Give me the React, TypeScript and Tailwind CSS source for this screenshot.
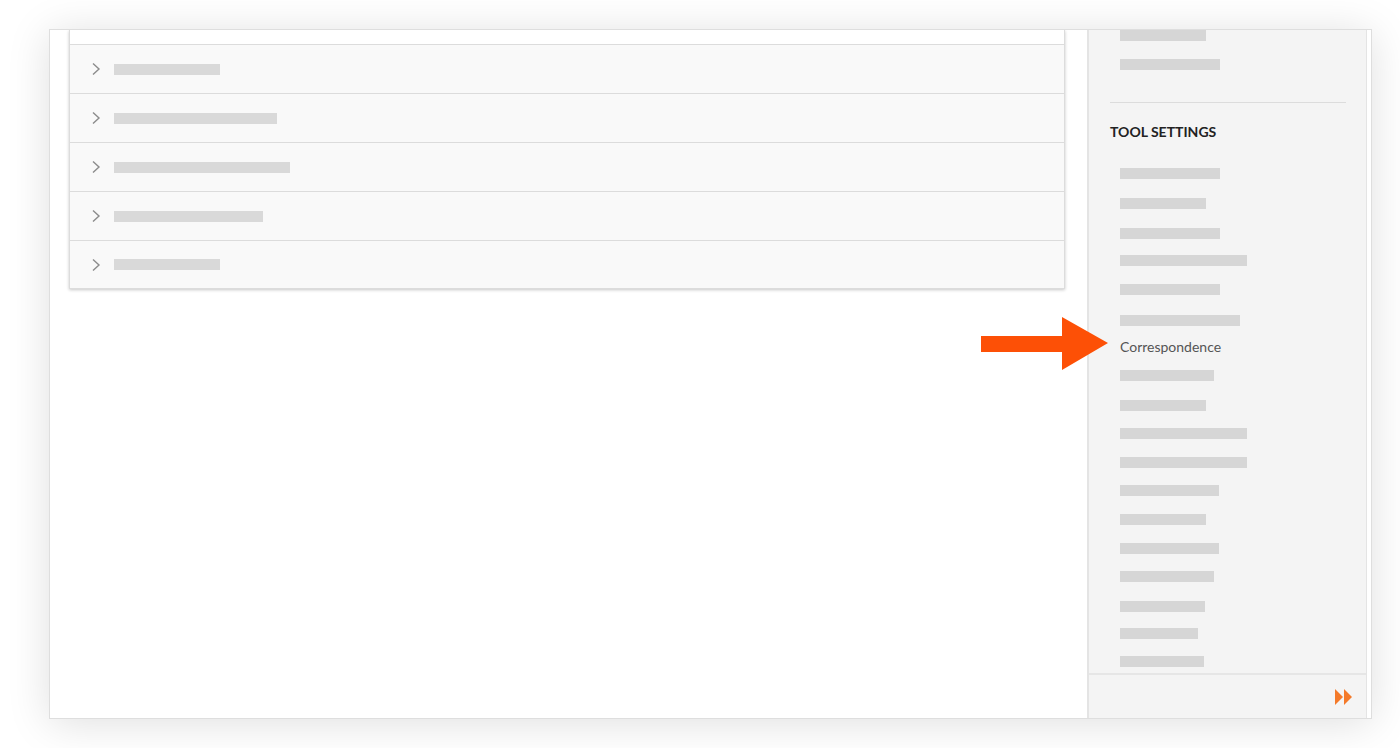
import React from "react";

type Row = { w: string };

const rows: Row[] = [
  { w: "w-[106px]" },
  { w: "w-[163px]" },
  { w: "w-[176px]" },
  { w: "w-[149px]" },
  { w: "w-[106px]" },
];

// sidebar list below TOOL SETTINGS, spacing taken from the screenshot
type Item = { w?: string; mt: string; label?: string };

const items: Item[] = [
  { w: "w-[100px]", mt: "mt-[28px]" },
  { w: "w-[86px]", mt: "mt-[19px]" },
  { w: "w-[100px]", mt: "mt-[19px]" },
  { w: "w-[127px]", mt: "mt-[16px]" },
  { w: "w-[100px]", mt: "mt-[18px]" },
  { w: "w-[120px]", mt: "mt-[20px]" },
  { label: "Correspondence", mt: "mt-[13px]" },
  { w: "w-[94px]", mt: "mt-[15px]" },
  { w: "w-[86px]", mt: "mt-[19px]" },
  { w: "w-[127px]", mt: "mt-[17px]" },
  { w: "w-[127px]", mt: "mt-[18px]" },
  { w: "w-[99px]", mt: "mt-[17px]" },
  { w: "w-[86px]", mt: "mt-[18px]" },
  { w: "w-[99px]", mt: "mt-[18px]" },
  { w: "w-[94px]", mt: "mt-[17px]" },
  { w: "w-[85px]", mt: "mt-[19px]" },
  { w: "w-[78px]", mt: "mt-[16px]" },
  { w: "w-[84px]", mt: "mt-[17px]" },
];

function Chevron() {
  return (
    <svg width="10" height="14" viewBox="0 0 10 14" className="shrink-0">
      <path d="M2 1.5 L8 7 L2 12.5" fill="none" stroke="#8c8c8c" strokeWidth="1.4" />
    </svg>
  );
}

function FastForward() {
  return (
    <svg width="19" height="16" viewBox="0 0 19 16">
      <path d="M0 0 L8 8 L0 16 Z" fill="#f47a2a" />
      <path d="M9 0 L17 8 L9 16 Z" fill="#f47a2a" />
    </svg>
  );
}

export default function App() {
  return (
    <div className="relative h-[748px] w-[1400px] overflow-hidden bg-white pl-[49px] pt-[29px] font-['Lato','Liberation_Sans',sans-serif]">
      <div className="flex h-[690px] w-[1323px] border border-[#dedede] bg-white shadow-[0_4px_40px_rgba(0,0,0,0.13)]">
        {/* main column */}
        <div className="w-[1037px] shrink-0 overflow-hidden pl-[19px] pr-[22px]">
          <div className="border-x border-b border-[#dcdcdc] bg-[#f9f9f9] shadow-[0_1px_3px_rgba(0,0,0,0.22)]">
            <div className="h-[15px] border-b border-[#dcdcdc] bg-white" />
            {rows.map((r, i) => (
              <div
                key={i}
                className={
                  "flex items-center gap-[13px] pl-[21px] " +
                  (i < rows.length - 1 ? "h-[49px] border-b border-[#dcdcdc]" : "h-[47px]")
                }
              >
                <Chevron />
                <div className={"h-[11px] bg-[#d9d9d9] " + r.w} />
              </div>
            ))}
          </div>
        </div>

        {/* sidebar */}
        <div className="flex w-[280px] shrink-0 flex-col border-l-2 border-r border-[#e4e4e4] bg-[#f4f4f4]">
          <div className="flex-1 overflow-hidden pl-[21px] pr-[20px]">
            <div className="pl-[10px]">
              <div className="h-[11px] w-[86px] bg-[#d6d6d6]" />
              <div className="mt-[18px] h-[11px] w-[100px] bg-[#d6d6d6]" />
            </div>
            <div className="mt-[32px] h-px bg-[#dcdcdc]" />
            <div className="mt-[21px] h-[16px] text-[14px] font-bold leading-[16px] text-[#222]">
              TOOL SETTINGS
            </div>
            <div className="pl-[10px]">
              {items.map((it, i) =>
                it.label ? (
                  <div key={i} className={"h-[16px] text-[14px] leading-[16px] text-[#555] " + it.mt}>
                    {it.label}
                  </div>
                ) : (
                  <div key={i} className={"h-[11px] bg-[#d6d6d6] " + it.mt + " " + it.w} />
                )
              )}
            </div>
          </div>
          <div className="flex h-[45px] shrink-0 items-center justify-end border-t-2 border-[#e6e6e6] pr-[12px]">
            <FastForward />
          </div>
        </div>
      </div>

      {/* annotation arrow */}
      <svg
        className="absolute left-[980px] top-[316px]"
        width="130"
        height="56"
        viewBox="0 0 130 56"
      >
        <path d="M1 20 L82 20 L82 1 L128 27 L82 54 L82 36 L1 36 Z" fill="#fd5006" />
      </svg>
    </div>
  );
}
